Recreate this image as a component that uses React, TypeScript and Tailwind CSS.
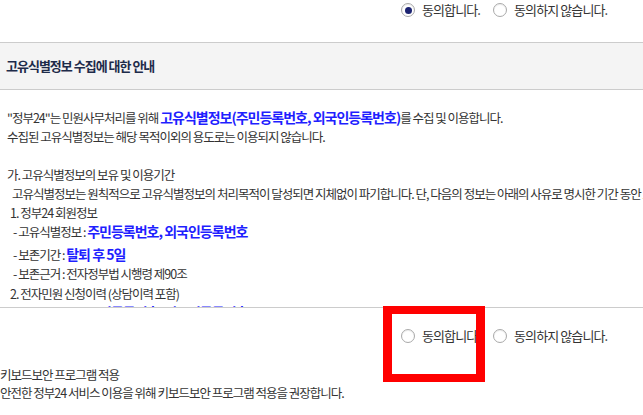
import React from "react";

// Radio pair used above and below the notice box
const Radio = ({ checked }: { checked?: boolean }) => (
  <span className="flex h-[14px] w-[14px] items-center justify-center rounded-full border border-[#a9a9a9] bg-white shadow-[inset_0_1px_1px_rgba(0,0,0,0.08)]">
    {checked && <span className="h-[7px] w-[7px] rounded-full bg-[#1d2472]" />}
  </span>
);

const AgreeRow = ({ agreed }: { agreed?: boolean }) => (
  <div className="flex items-center pl-[401px] text-[13px] tracking-[-0.9px] text-[#333]">
    <Radio checked={agreed} />
    <span className="ml-[7px]">동의합니다.</span>
    <span className="ml-[13px]">
      <Radio />
    </span>
    <span className="ml-[7px]">동의하지 않습니다.</span>
  </div>
);

const Blue = ({ children }: { children: React.ReactNode }) => (
  <b className="text-[14px] font-bold text-[#1f1fff]">{children}</b>
);

export default function App() {
  return (
    <div className="relative h-[415px] w-[643px] overflow-hidden bg-white font-['Noto_Sans_CJK_KR',sans-serif] text-[#333]">
      <div className="flex h-[20px] items-center">
        <AgreeRow agreed />
      </div>

      <div className="mt-[22px] flex h-[48px] items-center border-y border-[#cccccc] bg-[#f4f4f4] px-[6px]">
        <h3 className="text-[13px] font-bold tracking-[-1px] text-[#1e2b4a]">
          고유식별정보 수집에 대한 안내
        </h3>
      </div>

      <div className="h-[218px] overflow-hidden border-b border-[#cccccc] px-[7px] pt-[18px] text-[12.5px] leading-[19px] tracking-[-1px] whitespace-nowrap">
        <p>
          "정부24"는 민원사무처리를 위해{" "}
          <b className="text-[14px] font-bold tracking-[-1px] text-[#1f1fff]">
            고유식별정보(주민등록번호, 외국인등록번호)
          </b>
          를 수집 및 이용합니다.
        </p>
        <p>수집된 고유식별정보는 해당 목적이외의 용도로는 이용되지 않습니다.</p>
        <p>&nbsp;</p>
        <p>가. 고유식별정보의 보유 및 이용기간</p>
        <p className="pl-[5px]">
          고유식별정보는 원칙적으로 고유식별정보의 처리목적이 달성되면 지체없이
          파기합니다. 단, 다음의 정보는 아래의 사유로 명시한 기간 동안 보존합니다.
        </p>
        <p className="pl-[3px]">1. 정부24 회원정보</p>
        <p className="pl-[6px]">
          - 고유식별정보 : <Blue>주민등록번호, 외국인등록번호</Blue>
        </p>
        <p className="mt-[4px] pl-[6px]">
          - 보존기간 : <Blue>탈퇴 후 5일</Blue>
        </p>
        <p className="pl-[6px]">- 보존근거 : 전자정부법 시행령 제90조</p>
        <p className="mt-[1px] pl-[3px]">2. 전자민원 신청이력 (상담이력 포함)</p>
        <p className="pl-[6px]">
          - 고유식별정보 : <Blue>주민등록번호, 외국인등록번호</Blue>
        </p>
      </div>

      <div className="mt-[20px] flex h-[16px] items-center">
        <AgreeRow />
      </div>

      <div className="mt-[22px] text-[12.5px] leading-[18px] tracking-[-1px]">
        <p>키보드보안 프로그램 적용</p>
        <p>안전한 정부24 서비스 이용을 위해 키보드보안 프로그램 적용을 권장합니다.</p>
      </div>

      {/* highlight box drawn over the first agree option */}
      <div className="absolute left-[383px] top-[306px] h-[76px] w-[102px] border-x-[9px] border-y-[8px] border-[#ff0000]" />
    </div>
  );
}
